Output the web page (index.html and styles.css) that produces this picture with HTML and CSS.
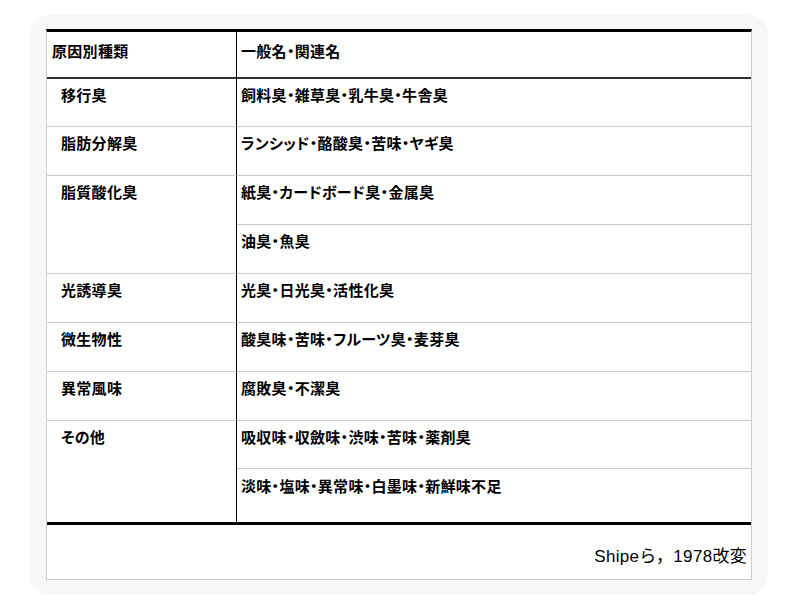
FILE: index.html
```html
<!DOCTYPE html>
<html lang="ja">
<head>
<meta charset="utf-8">
<title>原因別種類</title>
<link rel="stylesheet" href="styles.css">
</head>
<body>
<div class="card">
  <div class="table">
    <div class="grid">
      <div class="cell head left">原因別種類</div>
      <div class="cell head right">一般名・関連名</div>

      <div class="cell left r47">移行臭</div>
      <div class="cell right r47">飼料臭・雑草臭・乳牛臭・牛舎臭</div>

      <div class="cell left">脂肪分解臭</div>
      <div class="cell right">ランシッド・酪酸臭・苦味・ヤギ臭</div>

      <div class="cell left span2">脂質酸化臭</div>
      <div class="cell right">紙臭・カードボード臭・金属臭</div>
      <div class="cell right">油臭・魚臭</div>

      <div class="cell left">光誘導臭</div>
      <div class="cell right">光臭・日光臭・活性化臭</div>

      <div class="cell left">微生物性</div>
      <div class="cell right">酸臭味・苦味・フルーツ臭・麦芽臭</div>

      <div class="cell left">異常風味</div>
      <div class="cell right">腐敗臭・不潔臭</div>

      <div class="cell left span2 last">その他</div>
      <div class="cell right r47">吸収味・収斂味・渋味・苦味・薬剤臭</div>
      <div class="cell right last r53">淡味・塩味・異常味・白墨味・新鮮味不足</div>
    </div>
    <div class="footer">Shipeら，1978改変</div>
  </div>
</div>
</body>
</html>
```

FILE: styles.css
```css
html, body {
  margin: 0;
  padding: 0;
  background: #ffffff;
}

body {
  font-family: "Noto Sans CJK JP", "Liberation Sans", sans-serif;
  color: #000;
}

.card {
  margin: 15px 0 0 30px;
  width: 738px;
  height: 580px;
  box-sizing: border-box;
  padding: 14px 16px 15px 16px;
  background: #f7f7f7;
  border-radius: 20px;
}

.table {
  width: 706px;
  box-sizing: border-box;
  background: #fff;
  border-left: 1px solid #cccccc;
  border-right: 1px solid #cccccc;
  border-bottom: 1px solid #cccccc;
  border-top: 3px solid #000;
}

.grid {
  display: grid;
  grid-template-columns: 190px 1fr;
  border-bottom: 3px solid #000;
}

.cell {
  box-sizing: border-box;
  font-size: 15px;
  font-weight: 700;
  font-feature-settings: "palt" 1;
  letter-spacing: 0.3px;
  line-height: 20px;
  height: 49px;
  padding-top: 6px;
  border-bottom: 1px solid #cccccc;
  white-space: nowrap;
}

.cell.left {
  padding-left: 14px;
  border-right: 1px solid #000;
}

.cell.right {
  padding-left: 4px;
}

.cell.head {
  height: 47px;
  padding-top: 9px;
  border-bottom: 2px solid #333333;
}

.cell.head.left {
  padding-left: 5px;
}

.cell.r47 {
  height: 48px;
}

.cell.r53 {
  height: 53px;
  padding-top: 7px;
}

.cell.span2 {
  grid-row: span 2;
  height: auto;
}

.cell.last {
  border-bottom: none;
}

.footer {
  height: 54px;
  box-sizing: border-box;
  padding: 20px 4px 0 0;
  text-align: right;
  font-family: "Liberation Sans", "Noto Sans CJK JP", sans-serif;
  font-size: 17px;
  letter-spacing: 0.3px;
  line-height: 24px;
  font-weight: 400;
}
```
